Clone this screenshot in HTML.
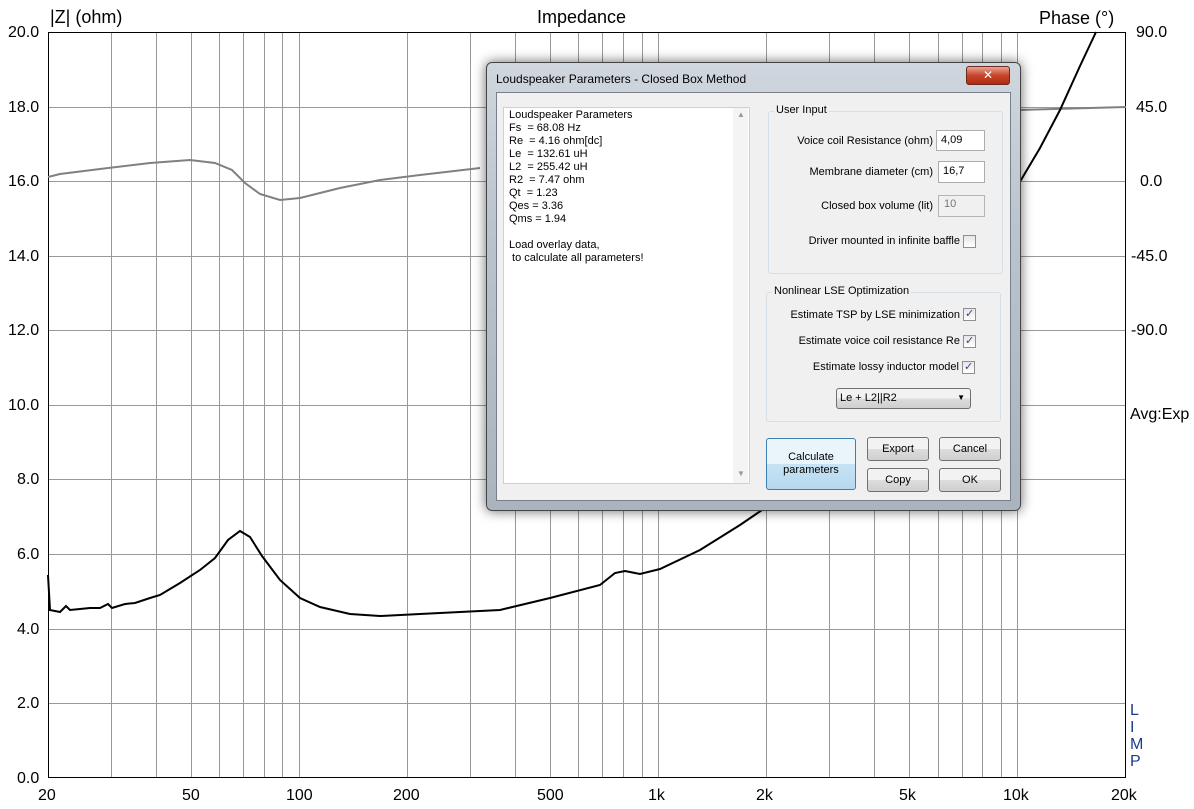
<!DOCTYPE html>
<html><head><meta charset="utf-8"><style>
body{margin:0;width:1194px;height:809px;background:#fff;position:relative;overflow:hidden;font-family:"Liberation Sans",sans-serif}
.t{position:absolute;font-size:16px;color:#000;white-space:nowrap}
.dlg{position:absolute;left:486px;top:62px;width:533px;height:447px;background:linear-gradient(#cfd6de,#b9c3cd 40%,#aab4be);border:1px solid #444;border-radius:6px;box-shadow:0 0 12px rgba(0,0,0,.6)}
.in{position:absolute;left:9px;top:29px;width:513px;height:407px;background:#f0f0f0;border:1px solid #7a8088}
.d{font-family:"Liberation Sans",sans-serif;font-size:11px;position:absolute;white-space:nowrap;color:#000}
.r{text-align:right}
.grp{position:absolute;border:1px solid #d5dfe5;border-radius:3px}
.box{position:absolute;background:#fff;border:1px solid #abadb3}
.cb{position:absolute;width:11px;height:11px;border:1px solid #8f8f8f;background:linear-gradient(#e6e6e6,#fff)}
.cb span{position:absolute;left:1px;top:-2px;color:#34487a;font-size:11px;font-family:"DejaVu Sans",sans-serif}
.btn{position:absolute;border:1px solid #707070;border-radius:3px;background:linear-gradient(#f2f2f2 50%,#dddddd 50%,#cfcfcf);text-align:center;font-family:"Liberation Sans",sans-serif;font-size:11px}
</style></head><body>
<svg width="1194" height="809" style="position:absolute;left:0;top:0">
<g stroke="#999" stroke-width="1">
<path d="M111.5 32V778M156.5 32V778M191.5 32V778M219.5 32V778M243.5 32V778M264.5 32V778M282.5 32V778M299.5 32V778M407.5 32V778M470.5 32V778M515.5 32V778M550.5 32V778M578.5 32V778M602.5 32V778M623.5 32V778M642.5 32V778M658.5 32V778M766.5 32V778M829.5 32V778M874.5 32V778M909.5 32V778M938.5 32V778M962.5 32V778M982.5 32V778M1001.5 32V778M1017.5 32V778"/>
<path d="M48 107.5H1126M48 181.5H1126M48 256.5H1126M48 330.5H1126M48 405.5H1126M48 479.5H1126M48 554.5H1126M48 629.5H1126M48 703.5H1126"/>
</g>
<rect x="48.5" y="32.5" width="1077" height="745" fill="none" stroke="#000"/>
<polyline fill="none" stroke="#808080" stroke-width="2" points="48,177 60,174 100,169 150,163 190,160 215,163 232,170 245,183 260,194 280,200 300,198 340,188 380,180 420,175 480,168"/>
<polyline fill="none" stroke="#808080" stroke-width="2" points="1018,110 1126,107"/>
<polyline fill="none" stroke="#000" stroke-width="2" points="48,575 50,610 55,611 60,612 66,606 70,610 80,609 90,608 100,608 108,604 112,608 125,604 135,603 150,598 160,595 180,583 200,570 215,558 228,540 240,531 250,537 262,556 280,580 300,598 320,607 350,614 380,616 420,614 500,610 550,598 600,585 615,573 625,571 640,574 660,569 700,550 740,525 762,510"/>
<polyline fill="none" stroke="#000" stroke-width="2" points="1018,185 1040,148 1060,110 1080,66 1096,32"/>
</svg>
<div class="t" style="left:50px;top:7px;font-size:18px">|Z| (ohm)</div>
<div class="t" style="left:537px;top:7px;font-size:18px">Impedance</div>
<div class="t" style="left:1039px;top:8px;font-size:18px">Phase (°)</div>
<div class="t" style="left:8px;top:24px">20.0</div>
<div class="t" style="left:8px;top:99px">18.0</div>
<div class="t" style="left:8px;top:173px">16.0</div>
<div class="t" style="left:8px;top:248px">14.0</div>
<div class="t" style="left:8px;top:322px">12.0</div>
<div class="t" style="left:8px;top:397px">10.0</div>
<div class="t" style="left:17px;top:471px">8.0</div>
<div class="t" style="left:17px;top:546px">6.0</div>
<div class="t" style="left:17px;top:621px">4.0</div>
<div class="t" style="left:17px;top:695px">2.0</div>
<div class="t" style="left:17px;top:770px">0.0</div>
<div class="t" style="left:1136px;top:24px">90.0</div>
<div class="t" style="left:1136px;top:99px">45.0</div>
<div class="t" style="left:1140px;top:173px">0.0</div>
<div class="t" style="left:1131px;top:248px">-45.0</div>
<div class="t" style="left:1131px;top:322px">-90.0</div>
<div class="t" style="left:1130px;top:406px">Avg:Exp</div>
<div class="t" style="left:1130px;top:702px;line-height:17px;color:#1a3a8a">L<br>I<br>M<br>P</div>
<div class="t" style="left:38px;top:787px">20</div>
<div class="t" style="left:182px;top:787px">50</div>
<div class="t" style="left:286px;top:787px">100</div>
<div class="t" style="left:393px;top:787px">200</div>
<div class="t" style="left:537px;top:787px">500</div>
<div class="t" style="left:648px;top:787px">1k</div>
<div class="t" style="left:756px;top:787px">2k</div>
<div class="t" style="left:899px;top:787px">5k</div>
<div class="t" style="left:1003px;top:787px">10k</div>
<div class="t" style="left:1111px;top:787px">20k</div>

<div class="dlg">
<div class="d" style="left:9px;top:9px;font-size:12px">Loudspeaker Parameters - Closed Box Method</div>
<div style="position:absolute;left:479px;top:3px;width:42px;height:17px;border:1px solid #6b2a20;border-radius:3px;background:linear-gradient(#e8a594,#c7442a 50%,#b02a12);color:#fff;text-align:center;font:bold 12px 'DejaVu Sans',sans-serif;line-height:17px">✕</div>
<div class="in">
<div class="box" style="left:6px;top:14px;width:245px;height:375px;border-color:#d0d0d0"></div>
<div style="position:absolute;left:236px;top:15px;width:15px;height:375px;background:#f4f4f4"></div>
<div class="d" style="left:240px;top:17px;color:#999;font-size:8px">▲</div>
<div class="d" style="left:240px;top:376px;color:#999;font-size:8px">▼</div>
<div class="d" style="left:12px;top:16px;line-height:13px">Loudspeaker Parameters<br>Fs&nbsp; = 68.08 Hz<br>Re&nbsp; = 4.16 ohm[dc]<br>Le&nbsp; = 132.61 uH<br>L2&nbsp; = 255.42 uH<br>R2&nbsp; = 7.47 ohm<br>Qt&nbsp; = 1.23<br>Qes = 3.36<br>Qms = 1.94<br><br>Load overlay data,<br>&nbsp;to calculate all parameters!</div>
<div class="grp" style="left:271px;top:18px;width:233px;height:161px"></div>
<div class="d" style="left:277px;top:11px;background:#f0f0f0;padding:0 2px">User Input</div>
<div class="d r" style="right:77px;top:42px">Voice coil Resistance (ohm)</div>
<div class="box" style="left:439px;top:37px;width:47px;height:19px"></div><div class="d" style="left:444px;top:41px">4,09</div>
<div class="d r" style="right:77px;top:73px">Membrane diameter (cm)</div>
<div class="box" style="left:441px;top:68px;width:45px;height:20px"></div><div class="d" style="left:446px;top:72px">16,7</div>
<div class="d r" style="right:77px;top:107px">Closed box volume (lit)</div>
<div class="box" style="left:441px;top:102px;width:45px;height:20px;background:#f0f0f0;border-color:#b5b5b5"></div><div class="d" style="left:447px;top:105px;color:#777">10</div>
<div class="d r" style="right:50px;top:142px">Driver mounted in infinite baffle</div>
<div class="cb" style="left:466px;top:142px"></div>
<div class="grp" style="left:269px;top:199px;width:233px;height:128px"></div>
<div class="d" style="left:275px;top:192px;background:#f0f0f0;padding:0 2px">Nonlinear LSE Optimization</div>
<div class="d r" style="right:50px;top:216px">Estimate TSP by LSE minimization</div>
<div class="cb" style="left:466px;top:215px"><span>✓</span></div>
<div class="d r" style="right:50px;top:242px">Estimate voice coil resistance Re</div>
<div class="cb" style="left:466px;top:242px"><span>✓</span></div>
<div class="d r" style="right:51px;top:268px">Estimate lossy inductor model</div>
<div class="cb" style="left:465px;top:268px"><span>✓</span></div>
<div class="btn" style="left:339px;top:295px;width:133px;height:19px;text-align:left"><span style="position:absolute;left:3px;top:3px">Le + L2||R2</span><span style="position:absolute;right:5px;top:4px;font-size:8px">▼</span></div>
<div class="btn" style="left:269px;top:345px;width:88px;height:50px;border-color:#3c7fb1;background:linear-gradient(#e9f4fb 50%,#c7e3f5 50%,#b6d8ef)"><div style="margin-top:12px;line-height:13px">Calculate<br>parameters</div></div>
<div class="btn" style="left:370px;top:344px;width:60px;height:22px;line-height:22px">Export</div>
<div class="btn" style="left:442px;top:344px;width:60px;height:22px;line-height:22px">Cancel</div>
<div class="btn" style="left:370px;top:375px;width:60px;height:22px;line-height:22px">Copy</div>
<div class="btn" style="left:442px;top:375px;width:60px;height:22px;line-height:22px">OK</div>
</div>
</div>
</body></html>
